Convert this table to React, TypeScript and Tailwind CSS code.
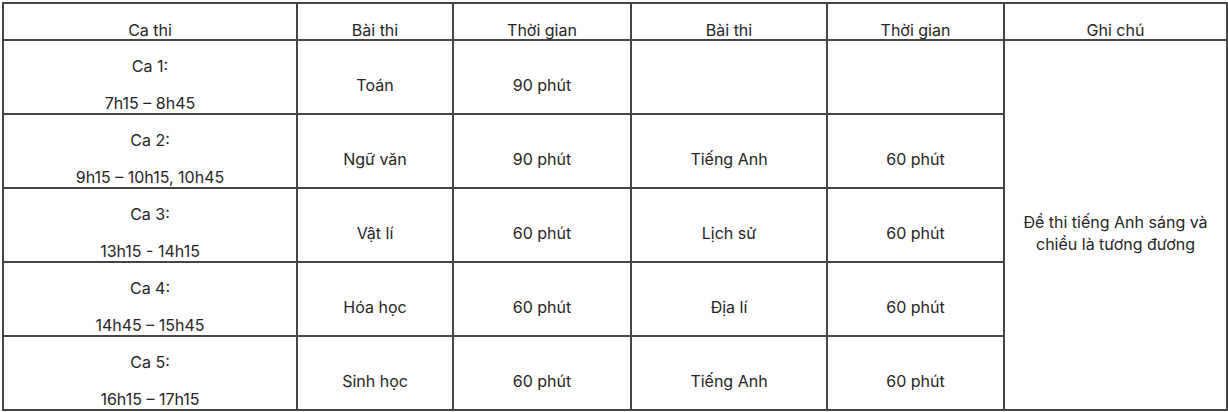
import React from 'react';

const rows = [
  { ca: 'Ca 1:', time: '7h15 – 8h45', bai1: 'Toán', tg1: '90 phút', bai2: '', tg2: '' },
  { ca: 'Ca 2:', time: '9h15 – 10h15, 10h45', bai1: 'Ngữ văn', tg1: '90 phút', bai2: 'Tiếng Anh', tg2: '60 phút' },
  { ca: 'Ca 3:', time: '13h15 - 14h15', bai1: 'Vật lí', tg1: '60 phút', bai2: 'Lịch sử', tg2: '60 phút' },
  { ca: 'Ca 4:', time: '14h45 – 15h45', bai1: 'Hóa học', tg1: '60 phút', bai2: 'Địa lí', tg2: '60 phút' },
  { ca: 'Ca 5:', time: '16h15 – 17h15', bai1: 'Sinh học', tg1: '60 phút', bai2: 'Tiếng Anh', tg2: '60 phút' },
];

const th = 'border-2 border-[#454545] font-normal text-center align-middle pt-[17px] pb-0 h-[37px] leading-[18px]';
const td = 'border-2 border-[#454545] text-center align-middle pt-[16px] pb-[1px] leading-[18px]';

export default function App() {
  return (
    <div className="w-[1228px] h-[412px] bg-white pt-[2px] pl-[2px]" style={{ fontFamily: 'Inter, "Noto Sans", sans-serif' }}>
      <table className="table-fixed border-collapse w-[1224px] text-[16px] text-[#262626]">
        <colgroup>
          <col className="w-[294px]" />
          <col className="w-[156px]" />
          <col className="w-[178px]" />
          <col className="w-[196px]" />
          <col className="w-[177px]" />
          <col className="w-[223px]" />
        </colgroup>
        <thead>
          <tr>
            <th className={th}>Ca thi</th>
            <th className={th}>Bài thi</th>
            <th className={th}>Thời gian</th>
            <th className={th}>Bài thi</th>
            <th className={th}>Thời gian</th>
            <th className={th}>Ghi chú</th>
          </tr>
        </thead>
        <tbody>
          {rows.map((r, i) => (
            <tr key={i} className="h-[74px]">
              <td className={td}>
                <p>{r.ca}</p>
                <p className="mt-[19px]">{r.time}</p>
              </td>
              <td className={td}>{r.bai1}</td>
              <td className={td}>{r.tg1}</td>
              <td className={td}>{r.bai2}</td>
              <td className={td}>{r.tg2}</td>
              {i === 0 && (
                <td rowSpan={5} className="border-2 border-[#454545] text-center align-middle pt-[16px] pb-[1px] px-2 leading-[22px]">
                  Đề thi tiếng Anh sáng và
                  <br />
                  chiều là tương đương
                </td>
              )}
            </tr>
          ))}
        </tbody>
      </table>
    </div>
  );
}
